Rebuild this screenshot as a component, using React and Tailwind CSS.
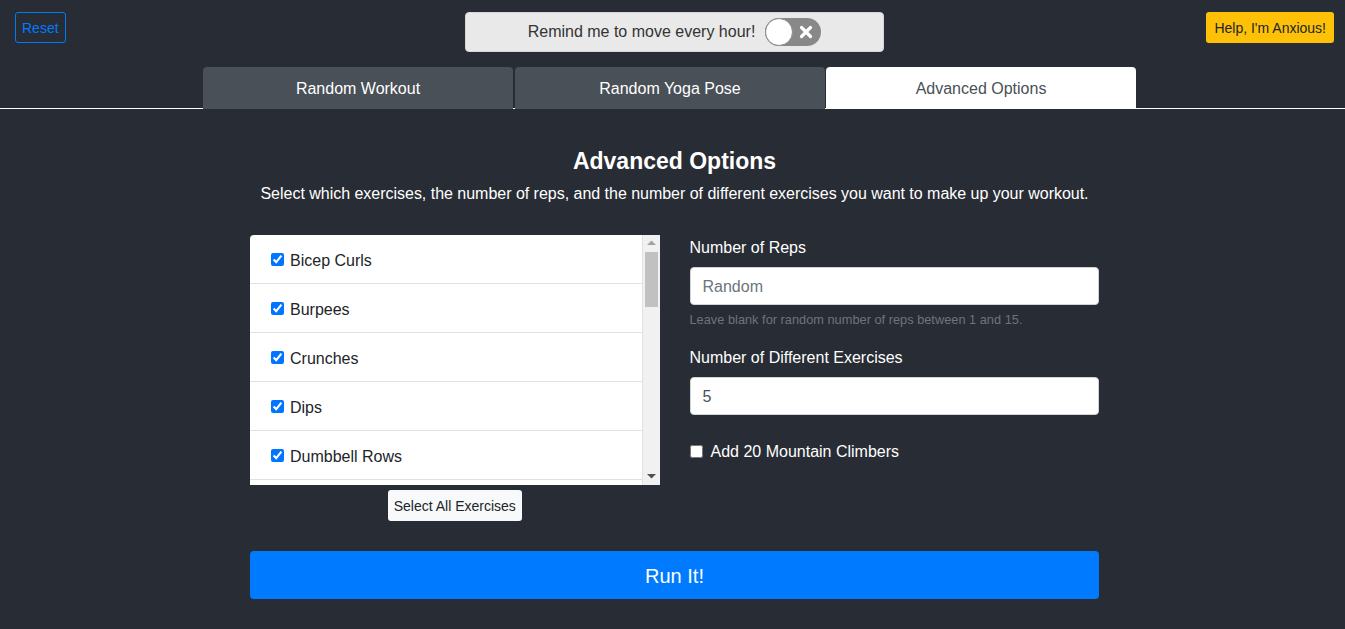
import React, { useState } from 'react';

const ejercicios = ['Bicep Curls', 'Burpees', 'Crunches', 'Dips', 'Dumbbell Rows'];

const App = () => {
  const [tab, setTab] = useState(2);
  const tabs = ['Random Workout', 'Random Yoga Pose', 'Advanced Options'];

  return (
    <div className="min-h-[629px] bg-[#282c34] text-white font-['Segoe_UI','Liberation_Sans',sans-serif]">
      {/* barra superior */}
      <div className="grid grid-cols-[1fr_auto_1fr] items-start pl-[15px] pr-[11px] pt-[12px]">
        <div>
          <button className="h-[31px] px-[6px] pt-[1px] text-[14px] text-[#007bff] border border-[#007bff] rounded-[3px]">Reset</button>
        </div>
        <div className="w-[419px] h-[40px] flex items-center justify-center gap-[10px] bg-[#e9e9e9] border border-[#d6d6d6] rounded-[4px]">
          <span className="text-[16px] text-[#333]">Remind me to move every hour!</span>
          <div className="relative w-[56px] h-[28px] rounded-full bg-[#888] flex items-center">
            <div className="w-[28px] h-[28px] rounded-full bg-white border border-[#888]" />
            <svg className="absolute left-[34px] top-[7px]" width="14" height="14" viewBox="0 0 14 14">
              <path d="M2.5 2.5 L11.5 11.5 M11.5 2.5 L2.5 11.5" stroke="white" strokeWidth="3.2" strokeLinecap="round" />
            </svg>
          </div>
        </div>
        <div className="flex justify-end">
          <button className="h-[31px] px-[8px] pt-[1px] text-[14px] text-[#212529] bg-[#ffc107] rounded-[3px]">Help, I'm Anxious!</button>
        </div>
      </div>

      {/* pestañas */}
      <div className="mt-[15px] border-b border-white flex pl-[203px]">
        {tabs.map((t, i) => (
          <button
            key={t}
            onClick={() => setTab(i)}
            className={
              (i === tab ? 'bg-white text-[#495057] ' : 'bg-[#495057] text-white ') +
              (i === 0 ? 'mr-[2px] ' : i === 1 ? 'mr-[1px] ' : '') +
              'w-[310px] h-[42px] pt-[2px] -mb-px rounded-t-[4px] text-[16px]'
            }
          >
            {t}
          </button>
        ))}
      </div>

      <div className="w-[849px] ml-[250px] pb-[30px]">
        <h2 className="mt-[38px] text-center text-[23px] leading-[29px] font-semibold">Advanced Options</h2>
        <p className="mt-[6px] text-center text-[16px] leading-[24px] whitespace-nowrap tracking-[-0.02px]">
          Select which exercises, the number of reps, and the number of different exercises you want to make up your workout.
        </p>

        <div className="mt-[29px] grid grid-cols-2 gap-[30px]">
          {/* lista de ejercicios */}
          <div className="flex flex-col items-center">
            <div className="w-full h-[250px] flex bg-white rounded-tl-[4px]">
              <div className="flex-1 overflow-hidden border-r border-[#dee2e6]">
                {ejercicios.map((e) => (
                  <label key={e} className="flex items-center h-[49px] pt-[3px] px-[21px] border-b border-[#dee2e6] text-[16px] text-[#212529]">
                    <input type="checkbox" defaultChecked className="w-[13px] h-[13px] mr-[6px] -mt-[3px]" />
                    {e}
                  </label>
                ))}
              </div>
              {/* barra de desplazamiento */}
              <div className="w-[17px] bg-[#f1f1f1] flex flex-col items-center">
                <svg className="mt-[5px]" width="9" height="6" viewBox="0 0 9 6">
                  <path d="M0 5 L4.5 0.5 L9 5 Z" fill="#a3a3a3" />
                </svg>
                <div className="mt-[6px] w-[13px] h-[55px] bg-[#c1c1c1]" />
                <div className="flex-1" />
                <svg className="mb-[6px]" width="9" height="6" viewBox="0 0 9 6">
                  <path d="M0 1 L9 1 L4.5 5.5 Z" fill="#505050" />
                </svg>
              </div>
            </div>
            <button className="mt-[5px] h-[31px] px-[6px] pt-[1px] text-[14px] text-[#212529] bg-[#f8f9fa] rounded-[3px]">Select All Exercises</button>
          </div>

          {/* opciones */}
          <div>
            <label className="block pt-[1px] text-[16px] leading-[24px] mb-[7px]">Number of Reps</label>
            <input
              placeholder="Random"
              className="w-full h-[38px] px-[12px] pt-[2px] bg-white border border-[#ced4da] rounded-[4px] text-[16px] text-[#495057] placeholder:text-[#6c757d] outline-none"
            />
            <p className="mt-[5px] text-[12.8px] leading-[19px] text-[#6c757d]">Leave blank for random number of reps between 1 and 15.</p>

            <label className="block mt-[16px] pt-[1px] text-[16px] leading-[24px] mb-[7px]">Number of Different Exercises</label>
            <input
              defaultValue="5"
              className="w-full h-[38px] px-[12px] pt-[2px] bg-white border border-[#ced4da] rounded-[4px] text-[16px] text-[#495057] outline-none"
            />

            <label className="mt-[25px] flex items-center text-[16px] leading-[24px]">
              <input type="checkbox" className="w-[13px] h-[13px] mr-[8px] -mt-[1px]" />
              Add 20 Mountain Climbers
            </label>
          </div>
        </div>

        <button className="mt-[30px] w-full h-[48px] pt-[2px] bg-[#007bff] rounded-[4px] text-[20px] text-white">Run It!</button>
      </div>
    </div>
  );
};

export default App;
